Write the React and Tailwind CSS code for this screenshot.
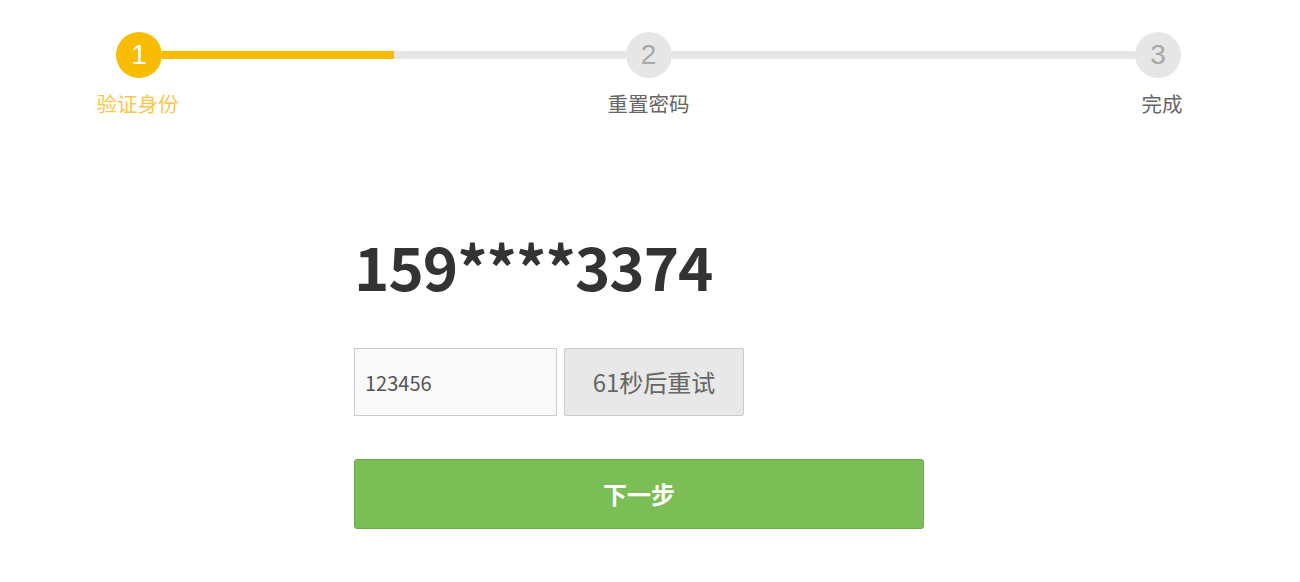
import React, { useState } from 'react';

const steps = [
  { num: 1, label: '验证身份' },
  { num: 2, label: '重置密码' },
  { num: 3, label: '完成' },
];

const cjk = { fontFamily: '"Noto Sans CJK SC", "Noto Sans", sans-serif' };

const Step = ({ num, label, active, shift = '' }) => (
  <div className="flex flex-col items-center w-[46px] shrink-0">
    <div
      className={`w-[46px] h-[46px] rounded-full flex items-center justify-center text-[28px] ${
        active ? 'bg-[#f8bd00] text-white' : 'bg-[#e6e6e6] text-[#a8a8a8]'
      }`}
      style={{ fontFamily: '"Liberation Sans", Arial, sans-serif' }}
    >
      {num}
    </div>
    <div
      className={`mt-[11px] whitespace-nowrap text-[20.5px] leading-[28px] ${shift} ${
        active ? 'text-[#f9c64d]' : 'text-[#666]'
      }`}
      style={cjk}
    >
      {label}
    </div>
  </div>
);

const App = () => {
  const [code, setCode] = useState('123456');

  return (
    <div className="w-[1300px] h-[582px] bg-white overflow-hidden" style={cjk}>
      {/* Progress steps */}
      <div className="pt-[32px] pl-[116px] w-[1181px]">
        <div className="flex items-start">
          <Step {...steps[0]} active shift="mr-[3px]" />
          <div className="flex-1 h-[8px] mt-[19px] bg-[#e6e6e6] flex">
            <div className="w-1/2 h-full bg-[#f8bd00]" />
          </div>
          <Step {...steps[1]} />
          <div className="flex-1 h-[8px] mt-[19px] bg-[#e6e6e6]" />
          <Step {...steps[2]} shift="ml-[8px]" />
        </div>
      </div>

      {/* Verification form */}
      <div className="pl-[354px] mt-[113px]">
        <div className="text-[60px] leading-[70px] font-bold text-[#333] tracking-[-1px]">159****3374</div>

        <div className="flex gap-[7px] mt-[48px]">
          <input
            value={code}
            onChange={(e) => setCode(e.target.value)}
            className="w-[203px] h-[68px] border border-[#ccc] bg-[#f9f9f9] px-[10px] text-[20px] text-[#555] outline-none"
            style={cjk}
          />
          <button className="w-[180px] h-[68px] border border-[#ccc] bg-[#e8e8e8] rounded-[2px] text-[24px] text-[#666]">
            61秒后重试
          </button>
        </div>

        <button className="mt-[43px] w-[570px] h-[70px] bg-[#7bbe56] border border-[#6aa84b] rounded-[3px] text-white text-[24px] font-bold">
          下一步
        </button>
      </div>
    </div>
  );
};

export default App;
